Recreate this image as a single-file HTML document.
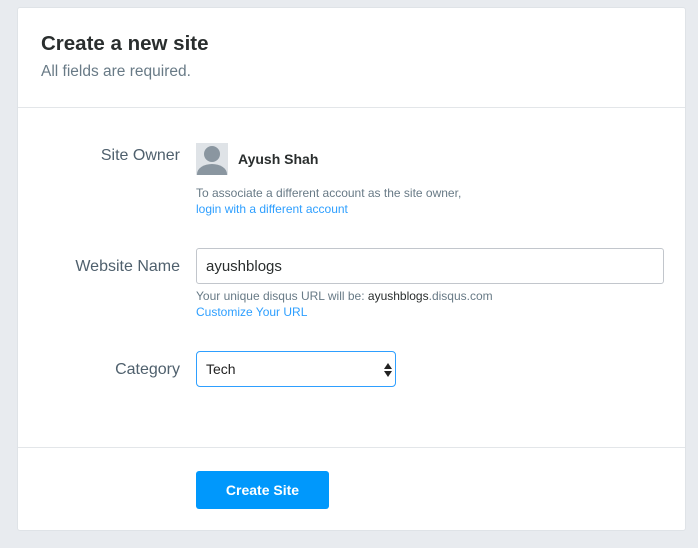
<!DOCTYPE html>
<html><head><style>
*{box-sizing:border-box;margin:0;padding:0}
html,body{width:698px;height:548px;overflow:hidden;background:#e8ebef;font-family:"Liberation Sans",sans-serif}
.card{position:absolute;left:17px;top:7px;width:669px;height:524px;background:#fff;border:1px solid #dfe3e7;border-radius:3px}
.a{position:absolute;white-space:nowrap}
.lbl{color:#4f606d;font-size:16px;text-align:right;right:505px}
.hr{position:absolute;left:0;right:0;height:1px;background:#e3e6e9}
.small{font-size:12px;color:#687a86}
.link{font-size:12px;color:#2e9fff}
</style></head><body>
<div class="card">
<div class="a" style="left:23px;top:24px;font-size:20.5px;color:#2a2e2e;font-weight:600">Create a new site</div>
<div class="a" style="left:23px;top:55px;font-size:15.5px;color:#687a86">All fields are required.</div>
<div class="hr" style="top:99px"></div>

<div class="a lbl" style="top:139px">Site Owner</div>
<div class="a" style="left:178px;top:135px;width:32px;height:32px;background:#dfe3e7;overflow:hidden">
<div style="position:absolute;left:8px;top:3px;width:16px;height:16px;border-radius:50%;background:#8a96a0"></div>
<div style="position:absolute;left:1px;top:21px;width:30px;height:20px;border-radius:50%;background:#8a96a0"></div>
</div>
<div class="a" style="left:220px;top:143px;font-size:14px;color:#2a2e2e;font-weight:600">Ayush Shah</div>
<div class="a small" style="left:178px;top:178px">To associate a different account as the site owner,</div>
<div class="a link" style="left:178px;top:194px">login with a different account</div>

<div class="a lbl" style="top:250px">Website Name</div>
<div class="a" style="left:178px;top:240px;width:468px;height:36px;border:1px solid #c2c6cc;border-radius:3px"></div>
<div class="a" style="left:188px;top:250px;font-size:15px;color:#2a2e2e">ayushblogs</div>
<div class="a small" style="left:178px;top:281px">Your unique disqus URL will be: <span style="color:#2a2e2e">ayushblogs</span>.disqus.com</div>
<div class="a link" style="left:178px;top:297px">Customize Your URL</div>

<div class="a lbl" style="top:353px">Category</div>
<div class="a" style="left:178px;top:343px;width:200px;height:36px;border:1px solid #2e9fff;border-radius:4px"></div>
<div class="a" style="left:188px;top:353px;font-size:14px;color:#222">Tech</div>
<div class="a" style="left:366px;top:355px;width:0;height:0;border-left:4px solid transparent;border-right:4px solid transparent;border-bottom:6px solid #222"></div>
<div class="a" style="left:366px;top:363px;width:0;height:0;border-left:4px solid transparent;border-right:4px solid transparent;border-top:6px solid #222"></div>

<div class="hr" style="top:439px"></div>
<div class="a" style="left:178px;top:463px;width:133px;height:38px;background:#0098fc;border-radius:3px;color:#fff;font-size:14px;font-weight:600;text-align:center;line-height:38px">Create Site</div>
</div>
</body></html>
